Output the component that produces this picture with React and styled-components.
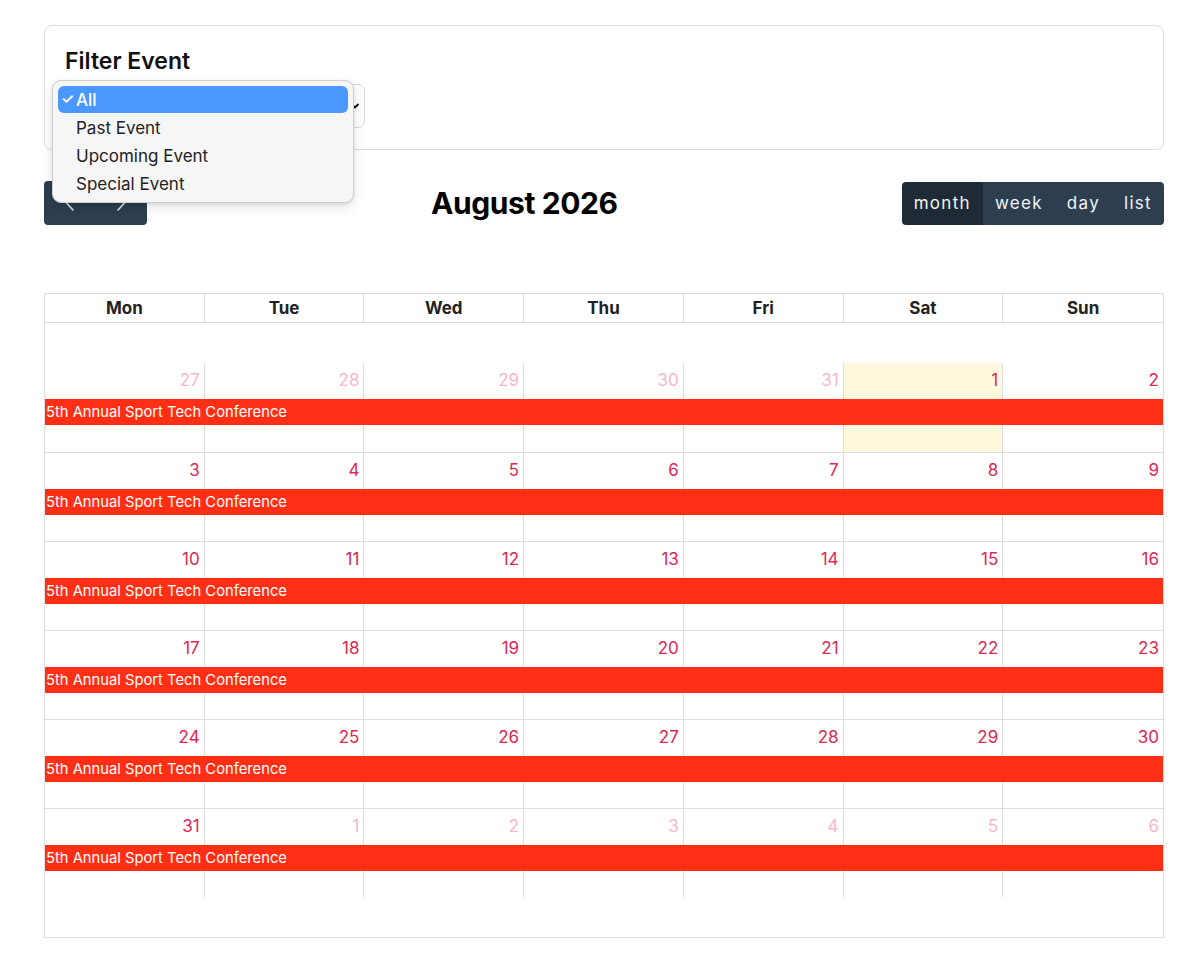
import React from "react";
import styled, { createGlobalStyle } from "styled-components";

const GlobalStyle = createGlobalStyle`
  html, body {
    margin: 0;
    padding: 0;
    background: #fff;
    font-family: Inter, "Noto Sans", "Liberation Sans", sans-serif;
    color: #222;
  }
  * { box-sizing: border-box; }
`;

const Page = styled.div`
  padding: 25px 27px 20px 44px;
`;

const FilterCard = styled.div`
  position: relative;
  height: 125px;
  border: 1px solid #dedede;
  border-radius: 8px;
  padding: 20px 20px;
`;

const FilterTitle = styled.h3`
  margin: 0;
  font-size: 23px;
  font-weight: 600;
  line-height: 30px;
  color: #111;
`;

const SelectBox = styled.div`
  margin-top: 8px;
  width: 300px;
  height: 44px;
  border: 1px solid #d8d8d8;
  border-radius: 7px;
  display: flex;
  align-items: center;
  justify-content: flex-end;
  padding-right: 4px;
`;

const Popup = styled.div`
  position: absolute;
  left: 7px;
  top: 54px;
  width: 302px;
  padding: 5px 5px 4px;
  background: #f6f6f6;
  border: 1px solid #cfcfcf;
  border-radius: 9px;
  box-shadow: 0 4px 12px rgba(0, 0, 0, 0.12), 0 1px 3px rgba(0, 0, 0, 0.08);
  z-index: 5;
`;

const Option = styled.div`
  position: relative;
  height: ${(p) => (p.active ? "27px" : "28px")};
  margin-bottom: ${(p) => (p.active ? "1px" : "0")};
  padding-left: 18px;
  display: flex;
  align-items: center;
  font-size: 17px;
  color: ${(p) => (p.active ? "#fff" : "#222")};
  background: ${(p) => (p.active ? "#4a98fd" : "transparent")};
  border-radius: 6px;
  font-weight: ${(p) => (p.active ? 500 : 400)};
`;

const Check = styled.span`
  position: absolute;
  left: 3px;
  top: 3px;
  font-size: 15px;
  font-weight: 600;
`;

const Toolbar = styled.div`
  margin-top: 31px;
  display: flex;
  align-items: center;
  justify-content: space-between;
`;

const ButtonGroup = styled.div`
  display: flex;
  border-radius: 4px;
  overflow: hidden;
`;

const NavButton = styled.button`
  width: 51.5px;
  height: 44px;
  border: none;
  background: #2c3e50;
  display: flex;
  align-items: center;
  justify-content: center;
  padding: 0;
`;

const ViewButton = styled.button`
  height: 43px;
  border: none;
  padding: 0 12px;
  background: ${(p) => (p.active ? "#1e2b37" : "#2c3e50")};
  color: #f2f4f6;
  font-family: inherit;
  font-size: 17px;
  letter-spacing: 1.3px;
`;

const MonthTitle = styled.h2`
  margin: 0;
  font-size: 30px;
  font-weight: 700;
  letter-spacing: -0.4px;
  color: #000;
`;

const Calendar = styled.div`
  margin-top: 68px;
  border: 1px solid #dddddd;
`;

const HeaderRow = styled.div`
  display: grid;
  grid-template-columns: repeat(7, 1fr);
  border-bottom: 1px solid #dddddd;
`;

const HeaderCell = styled.div`
  height: 28px;
  display: flex;
  align-items: center;
  justify-content: center;
  font-size: 17px;
  font-weight: 700;
  color: #222;
  border-right: ${(p) => (p.last ? "none" : "1px solid #dddddd")};
`;

const Body = styled.div`
  padding: 40px 0;
`;

const Week = styled.div`
  display: grid;
  grid-template-columns: repeat(7, 1fr);
  grid-template-rows: 36px 26px ${(p) => (p.first ? "27px" : "26px")};
  border-top: ${(p) => (p.first ? "none" : "1px solid #dddddd")};
`;

const DayCell = styled.div`
  grid-row: 1 / -1;
  grid-column: ${(p) => p.col};
  border-right: ${(p) => (p.last ? "none" : "1px solid #dddddd")};
  background: ${(p) => (p.today ? "#fff8dc" : "transparent")};
  text-align: right;
  padding: 6px 4px 0 0;
  font-size: 17px;
  line-height: 22px;
  color: ${(p) => (p.other ? "#f5b8c8" : "#dc2852")};
`;

const EventBar = styled.div`
  grid-row: 2;
  grid-column: 1 / -1;
  z-index: 1;
  background: #ff2f16;
  color: #fff;
  font-size: 14.75px;
  display: flex;
  align-items: center;
  padding-left: 1px;
`;

const Chevron = ({ dir }) => (
  <svg width="12" height="18" viewBox="0 0 12 18" fill="none">
    <path
      d={dir === "left" ? "M9 2 L2.5 9 L9 16" : "M3 2 L9.5 9 L3 16"}
      stroke="#dfe4ea"
      strokeWidth="1.6"
      strokeLinecap="round"
      strokeLinejoin="round"
    />
  </svg>
);

const SmallChevron = () => (
  <svg width="10" height="8" viewBox="0 0 10 8" fill="none">
    <path d="M2 2.5 L5 5.5 L8 2.5" stroke="#111" strokeWidth="1.8" strokeLinecap="round" strokeLinejoin="round" />
  </svg>
);

const days = ["Mon", "Tue", "Wed", "Thu", "Fri", "Sat", "Sun"];

const weeks = [
  [[27, 1], [28, 1], [29, 1], [30, 1], [31, 1], [1, 0, 1], [2, 0]],
  [[3], [4], [5], [6], [7], [8], [9]],
  [[10], [11], [12], [13], [14], [15], [16]],
  [[17], [18], [19], [20], [21], [22], [23]],
  [[24], [25], [26], [27], [28], [29], [30]],
  [[31], [1, 1], [2, 1], [3, 1], [4, 1], [5, 1], [6, 1]],
];

const options = ["All", "Past Event", "Upcoming Event", "Special Event"];

const App = () => (
  <>
    <GlobalStyle />
    <Page>
      <FilterCard>
        <FilterTitle>Filter Event</FilterTitle>
        <SelectBox>
          <SmallChevron />
        </SelectBox>
        <Popup>
          {options.map((o, i) => (
            <Option key={o} active={i === 0}>
              {i === 0 && <Check>✓</Check>}
              {o}
            </Option>
          ))}
        </Popup>
      </FilterCard>

      <Toolbar>
        <ButtonGroup>
          <NavButton>
            <Chevron dir="left" />
          </NavButton>
          <NavButton>
            <Chevron dir="right" />
          </NavButton>
        </ButtonGroup>
        <MonthTitle>August 2026</MonthTitle>
        <ButtonGroup>
          <ViewButton active>month</ViewButton>
          <ViewButton>week</ViewButton>
          <ViewButton>day</ViewButton>
          <ViewButton>list</ViewButton>
        </ButtonGroup>
      </Toolbar>

      <Calendar>
        <HeaderRow>
          {days.map((d, i) => (
            <HeaderCell key={d} last={i === 6}>
              {d}
            </HeaderCell>
          ))}
        </HeaderRow>
        <Body>
          {weeks.map((w, wi) => (
            <Week key={wi} first={wi === 0}>
              {w.map(([n, other, today], i) => (
                <DayCell key={i} col={i + 1} last={i === 6} other={other} today={today}>
                  {n}
                </DayCell>
              ))}
              <EventBar>5th Annual Sport Tech Conference</EventBar>
            </Week>
          ))}
        </Body>
      </Calendar>
    </Page>
  </>
);

export default App;
